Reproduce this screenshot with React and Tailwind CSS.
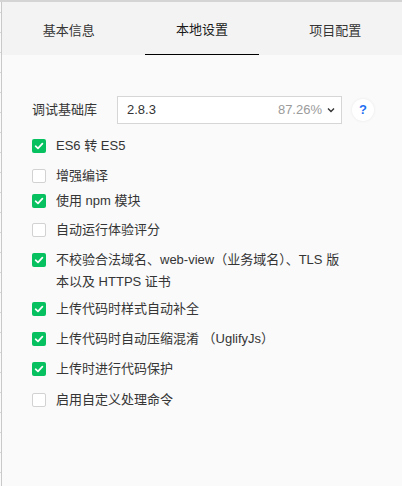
import { useState } from "react";

const tabs = ["基本信息", "本地设置", "项目配置"];

const options = [
  { label: "ES6 转 ES5", checked: true, mt: "mt-[11px]" },
  { label: "增强编译", checked: false, mt: "mt-[8px]" },
  { label: "使用 npm 模块", checked: true, mt: "mt-[3px]" },
  { label: "自动运行体验评分", checked: false, mt: "mt-[7px]" },
  {
    label: (
      <>
        不校验合法域名、web-view（业务域名）、TLS 版
        <br />
        本以及 HTTPS 证书
      </>
    ),
    checked: true,
    mt: "mt-[8px]",
  },
  { label: "上传代码时样式自动补全", checked: true, mt: "mt-[5px]" },
  { label: "上传代码时自动压缩混淆 （UglifyJs）", checked: true, mt: "mt-[8px]" },
  { label: "上传时进行代码保护", checked: true, mt: "mt-[8px]" },
  { label: "启用自定义处理命令", checked: false, mt: "mt-[9px]" },
];

const Checkbox = ({ checked, onClick }) =>
  checked ? (
    <button
      onClick={onClick}
      className="mt-[4px] w-[14px] h-[14px] shrink-0 rounded-[2px] bg-[#07c160] flex items-center justify-center"
    >
      <svg width="10" height="10" viewBox="0 0 10 10" fill="none">
        <polyline
          points="1.6,5.2 4,7.4 8.4,2.6"
          stroke="#fff"
          strokeWidth="1.7"
          strokeLinecap="round"
          strokeLinejoin="round"
        />
      </svg>
    </button>
  ) : (
    <button
      onClick={onClick}
      className="mt-[4px] w-[14px] h-[14px] shrink-0 rounded-[2px] bg-white border border-[#d2d2d2]"
    />
  );

export default function App() {
  const [active, setActive] = useState(1);
  const [checks, setChecks] = useState(options.map((o) => o.checked));

  const toggle = (i) => setChecks((c) => c.map((v, j) => (j === i ? !v : v)));

  return (
    <div
      className="w-[402px] h-[486px] bg-[#fafafa] border-t-2 border-[#d4d4d4] flex text-[#353535] text-[13px]"
      style={{ fontFamily: '"Liberation Sans", "Noto Sans CJK SC", sans-serif' }}
    >
      {/* ruler ticks + divider */}
      <div className="w-px h-full bg-[repeating-linear-gradient(to_bottom,transparent_0px,transparent_10px,#d6d6d6_10px,#d6d6d6_11px,transparent_11px,transparent_20px)]" />
      <div className="w-px h-full bg-[#c9c9c9]" />

      <div className="flex-1 flex flex-col">
        {/* Tabs */}
        <div className="h-[53px] bg-[#f3f3f3] grid grid-cols-3">
          {tabs.map((t, i) => (
            <div key={t} className="px-[10px] h-full" onClick={() => setActive(i)}>
              <div
                className={`h-full flex items-center justify-center pt-[4px] leading-[20px] ${
                  active === i ? "border-b border-black text-[#1a1a1a]" : ""
                }`}
              >
                {t}
              </div>
            </div>
          ))}
        </div>

        {/* Settings */}
        <div className="pl-[30px] pt-[41px] flex flex-col">
          <div className="flex items-center h-[28px]">
            <div className="w-[85px] leading-[20px]">调试基础库</div>
            <div className="w-[225px] h-[28px] border border-[#d6d6d6] bg-white flex items-center pl-[9px] pr-[6px]">
              <span className="flex-1 text-[#333]">2.8.3</span>
              <span className="text-[#9b9b9b]">87.26%</span>
              <svg className="ml-[5px]" width="8" height="6" viewBox="0 0 8 6" fill="none">
                <polyline points="1,1.5 4,4.5 7,1.5" stroke="#333" strokeWidth="1.4" />
              </svg>
            </div>
            <div className="ml-[10px] w-[22px] h-[22px] rounded-full bg-white shadow-[0_0_3px_rgba(0,0,0,0.08)] flex items-center justify-center text-[#1f6ff2] font-bold text-[13px]">
              ?
            </div>
          </div>

          {options.map((o, i) => (
            <div key={i} className={`flex gap-[10px] ${o.mt}`}>
              <Checkbox checked={checks[i]} onClick={() => toggle(i)} />
              <div className="leading-[22px]">{o.label}</div>
            </div>
          ))}
        </div>
      </div>
    </div>
  );
}
